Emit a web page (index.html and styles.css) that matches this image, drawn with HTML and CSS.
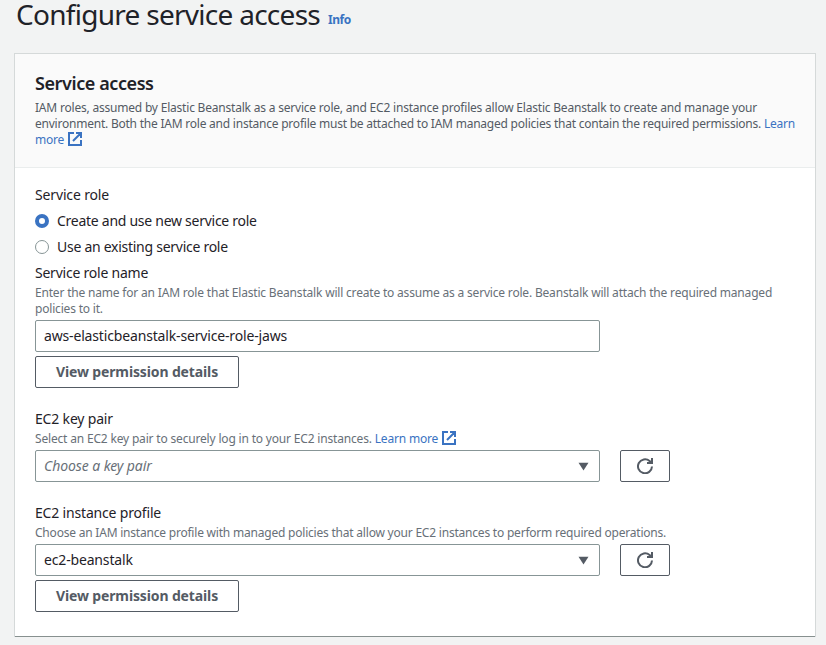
FILE: index.html
```
<!DOCTYPE html>
<html lang="en">
<head>
<meta charset="utf-8">
<title>Configure service access</title>
<link rel="stylesheet" href="styles.css">
</head>
<body>
<svg class="defs" aria-hidden="true">
  <symbol id="external" viewBox="0 0 14 14"><path d="M6 1H1v12h12V8M8 1h5v5M13 1 5 9" fill="none" stroke="currentColor" stroke-width="2"/></symbol>
  <symbol id="refresh" viewBox="0 0 16 16"><path d="M15 8.5A7 7 0 1 1 12.6 3L15 5" fill="none" stroke="currentColor" stroke-width="2"/><path d="M14 0h2v6h-6V4h4z" fill="currentColor"/></symbol>
</svg>
<main class="page">
  <header class="page-title">
    <h1>Configure service access</h1>
    <a class="info">Info</a>
  </header>
  <section class="panel">
    <header class="panel-head">
      <h2>Service access</h2>
      <p class="hint intro"><span class="intro-first">IAM roles, assumed by Elastic Beanstalk as a service role, and EC2 instance profiles allow Elastic Beanstalk to create and manage your</span><br>environment. Both the IAM role and instance profile must be attached to IAM managed policies that contain the required permissions. <a>Learn<br>more <svg class="external"><use href="#external"/></svg></a></p>
    </header>
    <div class="panel-body">
      <div class="field">
        <div class="label">Service role</div>
        <div class="radios">
          <label class="radio"><span class="dot checked"></span>Create and use new service role</label>
          <label class="radio"><span class="dot"></span>Use an existing service role</label>
        </div>
        <div class="label role-name">Service role name</div>
        <p class="hint">Enter the name for an IAM role that Elastic Beanstalk will create to assume as a service role. Beanstalk will attach the required managed<br>policies to it.</p>
        <div class="control">aws-elasticbeanstalk-service-role-jaws</div>
        <button class="button">View permission details</button>
      </div>
      <div class="field">
        <div class="label ec2">EC2 key pair</div>
        <p class="hint key-hint">Select an EC2 key pair to securely log in to your EC2 instances. <a>Learn more <svg class="external"><use href="#external"/></svg></a></p>
        <div class="row">
          <div class="control select"><span class="placeholder">Choose a key pair</span><svg class="caret" viewBox="0 0 11 9"><path d="M.5.8h10L5.5 8.5z"/></svg></div>
          <button class="button refresh" aria-label="Refresh"><svg><use href="#refresh"/></svg></button>
        </div>
      </div>
      <div class="field">
        <div class="label ec2">EC2 instance profile</div>
        <p class="hint profile-hint">Choose an IAM instance profile with managed policies that allow your EC2 instances to perform required operations.</p>
        <div class="row">
          <div class="control select"><span>ec2-beanstalk</span><svg class="caret" viewBox="0 0 11 9"><path d="M.5.8h10L5.5 8.5z"/></svg></div>
          <button class="button refresh" aria-label="Refresh"><svg><use href="#refresh"/></svg></button>
        </div>
        <button class="button">View permission details</button>
      </div>
    </div>
  </section>
</main>
</body>
</html>
```
FILE: styles.css
```
* { box-sizing: border-box; }
body {
  margin: 0;
  height: 645px;
  background: #f2f3f3;
  color: #1f2228;
  font: 14px/22px "Noto Sans", sans-serif;
}
.defs { display: none; }
h1, h2, p { margin: 0; }
a { color: #3a73c2; }
.page { padding: 0 11px 0 15px; }
.page-title {
  display: flex;
  align-items: flex-start;
  gap: 8px;
  height: 54px;
}
h1 {
  padding-left: 1px;
  font-size: 28px;
  line-height: 28px;
  font-weight: 400;
  letter-spacing: -0.72px;
}
.info {
  padding-top: 9px;
  font-size: 12px;
  font-weight: 700;
  letter-spacing: -0.5px;
}
.panel {
  height: 582px;
  background: #fff;
  box-shadow: 0 1px 0 0 #87908f, 0 0 0 1px #d5d9d9;
}
.panel-head {
  height: 114px;
  padding: 18px 20px;
  background: #fafafa;
  border-bottom: 1px solid #eaeded;
}
h2 {
  margin-bottom: 5px;
  font-size: 18px;
  line-height: 22px;
  font-weight: 600;
  letter-spacing: -0.41px;
}
.hint {
  padding-top: 1px;
  margin-bottom: 3px;
  color: #687078;
  font-size: 12px;
  line-height: 16px;
  letter-spacing: -0.187px;
  white-space: nowrap;
}
.intro { color: #545b64; letter-spacing: -0.226px; }
.intro-first { letter-spacing: -0.204px; }
.key-hint { letter-spacing: -0.178px; }
.profile-hint { letter-spacing: -0.21px; }
.external {
  width: 14px;
  height: 14px;
  margin: -4px 0 -1px 1px;
  vertical-align: -1px;
}
.panel-body { padding: 16px 20px 24px; }
.field { margin-bottom: 20px; }
.label { letter-spacing: -0.15px; }
.label.role-name { letter-spacing: -0.23px; }
.label.ec2 { letter-spacing: -0.175px; }
.radios { display: grid; gap: 4px; margin: 4px 0; }
.radio {
  display: flex;
  align-items: center;
  gap: 8px;
  letter-spacing: -0.27px;
}
.dot {
  width: 14px;
  height: 14px;
  border: 1px solid #879596;
  border-radius: 50%;
  background: #fff;
}
.dot.checked { border: 4px solid #3a73c2; }
.control {
  width: 565px;
  height: 32px;
  padding: 4px 8px;
  border: 1px solid #879596;
  border-radius: 2px;
  background: #fff;
  letter-spacing: -0.16px;
}
.select {
  display: flex;
  align-items: center;
  justify-content: space-between;
  padding-right: 10px;
}
.placeholder { color: #687078; font-style: italic; letter-spacing: -0.08px; }
.caret { width: 11px; height: 9px; fill: #545b64; }
.row { display: flex; gap: 20px; }
.button {
  display: block;
  width: 204px;
  height: 32px;
  margin-top: 4px;
  padding: 0;
  border: 1px solid #545b64;
  border-radius: 2px;
  background: #fff;
  color: #545b64;
  font: inherit;
  font-weight: 700;
  letter-spacing: -0.13px;
}
.refresh {
  display: flex;
  align-items: center;
  justify-content: center;
  width: 50px;
  margin: 0;
}
.refresh svg { width: 16px; height: 16px; }
```
